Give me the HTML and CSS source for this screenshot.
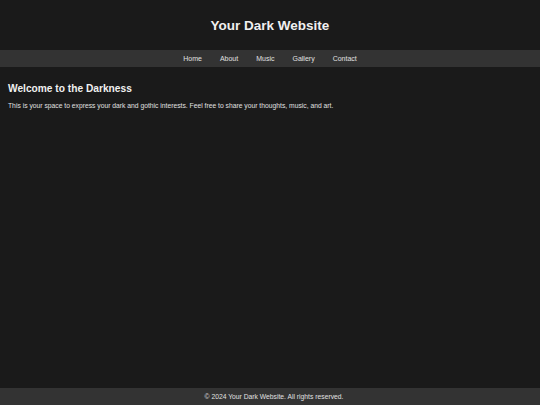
FILE: index.html
```html
<!DOCTYPE html>
<html>
<head>
<meta charset="utf-8">
<link rel="stylesheet" href="styles.css">
</head>
<body>
<div class="page">
  <header class="site-header">
    <h1 class="site-title">Your Dark Website</h1>
  </header>
  <nav class="site-nav">
    <a href="#">Home</a>
    <a href="#">About</a>
    <a href="#">Music</a>
    <a href="#">Gallery</a>
    <a href="#">Contact</a>
  </nav>
  <main class="content">
    <h2 class="content-title">Welcome to the Darkness</h2>
    <p class="content-text">This is your space to express your dark and gothic interests. Feel free to share your thoughts, music, and art.</p>
  </main>
  <footer class="site-footer">&copy; 2024 Your Dark Website. All rights reserved.</footer>
</div>
</body>
</html>
```
FILE: styles.css
```css
html, body {
  margin: 0;
  padding: 0;
  height: 100%;
}
body {
  background: #1a1a1a;
  color: #e0e0e0;
  font-family: "Liberation Sans", Arial, sans-serif;
}
.page {
  display: flex;
  flex-direction: column;
  min-height: 100vh;
}
.site-header {
  height: 50px;
  display: flex;
  align-items: center;
  justify-content: center;
}
.site-title {
  margin: 0;
  font-size: 13.5px;
  font-weight: bold;
  color: #f0f0f0;
}
.site-nav {
  background: #333333;
  height: 17px;
  display: flex;
  justify-content: center;
  align-items: center;
  gap: 18px;
}
.site-nav a {
  color: #e0e0e0;
  text-decoration: none;
  font-size: 7px;
}
.content {
  flex: 1;
  padding: 16px 8px 0;
}
.content-title {
  margin: 0 0 8px;
  font-size: 10.2px;
  font-weight: bold;
  color: #f0f0f0;
}
.content-text {
  margin: 0;
  font-size: 6.75px;
  color: #e0e0e0;
}
.site-footer {
  background: #333333;
  height: 17px;
  padding-left: 8px;
  display: flex;
  align-items: center;
  justify-content: center;
  font-size: 6.75px;
  color: #e0e0e0;
}
```
